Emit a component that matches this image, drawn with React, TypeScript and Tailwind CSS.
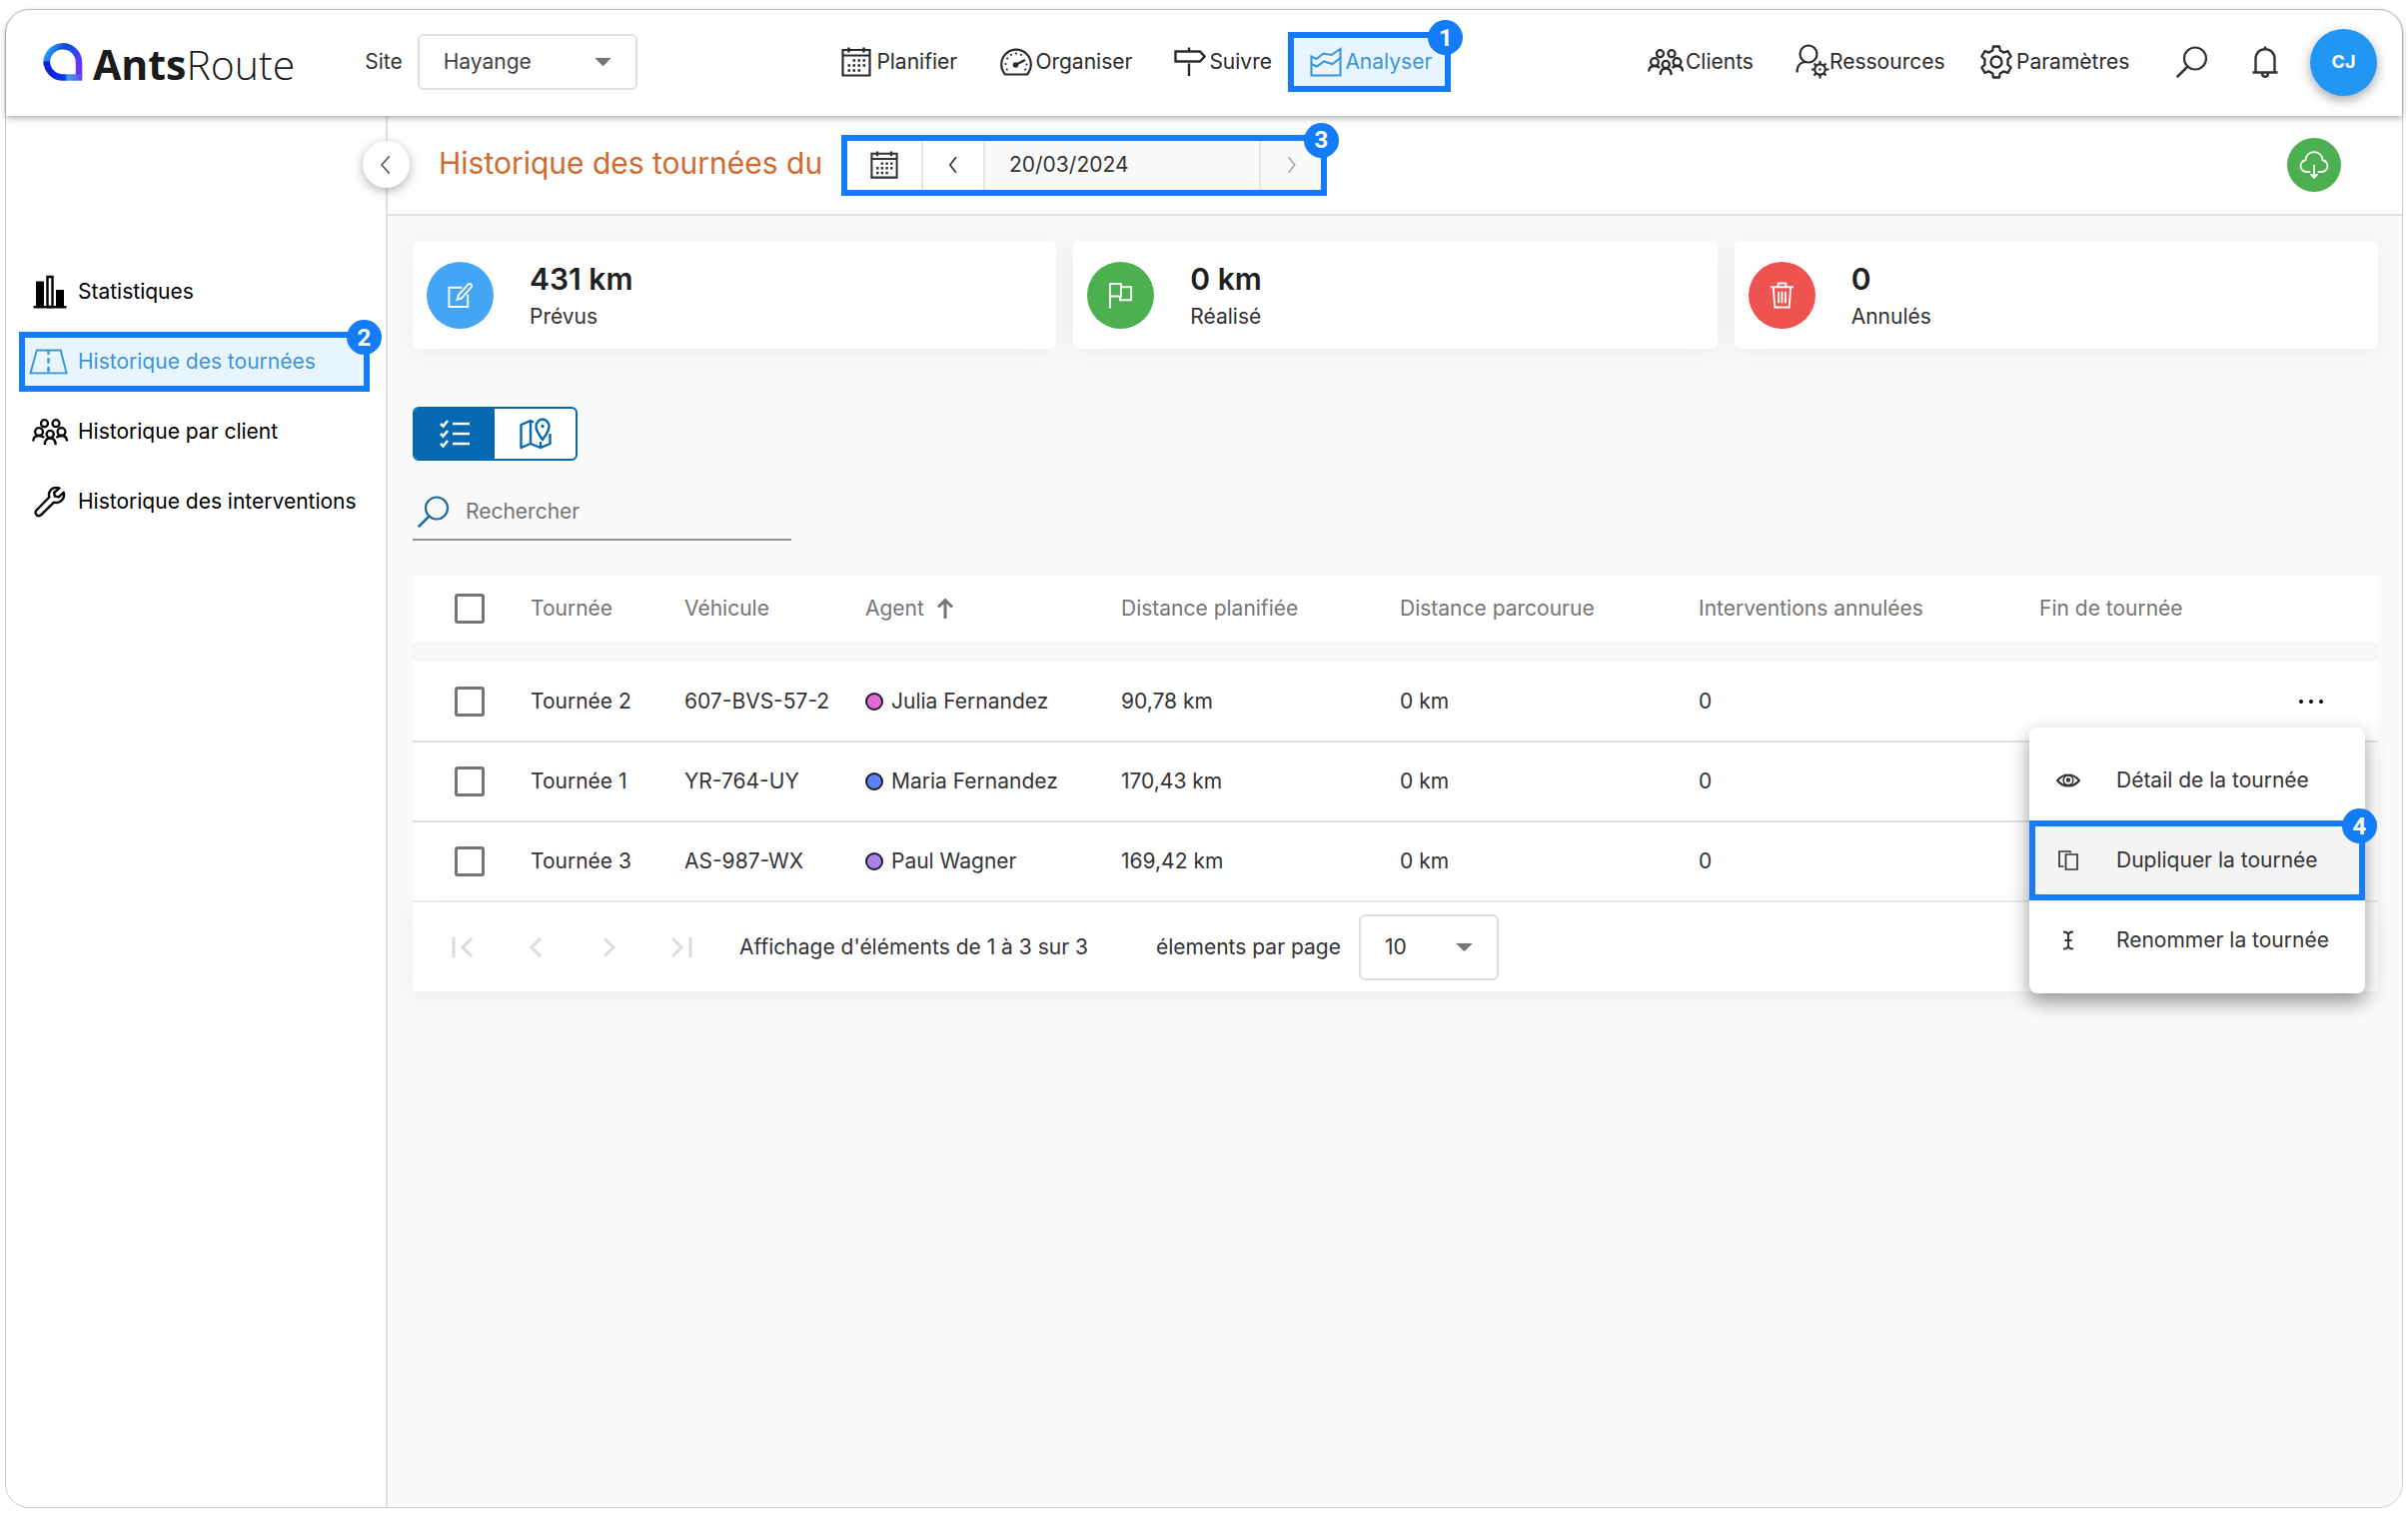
import type { ReactNode } from "react";
import clsx from "clsx";

interface IconProps {
  className?: string;
}

/* ---------- Icons ---------- */

const CalendarIcon = ({ className }: IconProps) => (
  <svg viewBox="0 0 30 30" fill="none" stroke="currentColor" strokeWidth="2.200" className={className}>
    <path d="M1.500 3h27v25.500h-27z M1.500 8.500h27" />
    <path d="M7.500 0.500v5M22.500 0.500v5" strokeWidth="2.500" />
    <path d="M11.500 13.500h13M6.500 18.500h18M6.500 23.500h13" strokeWidth="2.600" strokeDasharray="2.600 2.400" />
  </svg>
);

const GaugeIcon = ({ className }: IconProps) => (
  <svg viewBox="0 0 32 28" fill="none" stroke="currentColor" strokeWidth="2.200" className={className}>
    <path d="M5 26.500C2.500 23.500 1.200 20.200 1.200 16.500a14.800 14.800 0 0 1 29.600 0c0 3.700-1.300 7-3.800 10z" />
    <path d="M16 16.500l9-4.500" strokeWidth="2.400" />
    <circle cx="15.500" cy="17" r="2.800" fill="currentColor" stroke="none" />
    <g fill="currentColor" stroke="none">
      <circle cx="16" cy="5.500" r="1.100" />
      <circle cx="11" cy="6.800" r="1.100" />
      <circle cx="21" cy="6.800" r="1.100" />
      <circle cx="7.200" cy="10.500" r="1.100" />
      <circle cx="5.500" cy="16" r="1.100" />
      <circle cx="6.800" cy="21.500" r="1.100" />
      <circle cx="26.500" cy="16.500" r="1.100" />
      <circle cx="25.200" cy="21.500" r="1.100" />
    </g>
  </svg>
);

const SignpostIcon = ({ className }: IconProps) => (
  <svg viewBox="0 0 32 30" fill="none" stroke="currentColor" strokeWidth="2.400" className={className}>
    <path d="M1.500 4.500h24.500l4.500 5-4.500 5H1.500z M15 0.500v4 M15 16.500V29" />
  </svg>
);

const ChartIcon = ({ className }: IconProps) => (
  <svg viewBox="0 0 32 30" fill="none" stroke="currentColor" strokeWidth="2.100" className={className}>
    <path d="M1.500 9.500l5 2.500 7-5.500 8 1.500 9-6v26.500h-29z" />
    <path d="M1.500 17l5.500 2.500 7-5 8.500 2.500 8-6" />
  </svg>
);

const PeopleIcon = ({ className }: IconProps) => (
  <svg viewBox="0 0 36 26" fill="none" stroke="currentColor" strokeWidth="2.300" className={className}>
    <circle cx="12.500" cy="4.700" r="3.500" />
    <circle cx="24" cy="4.700" r="3.500" />
    <circle cx="7" cy="13" r="3.900" />
    <circle cx="29.500" cy="13" r="3.900" />
    <circle cx="18.200" cy="15.500" r="3.600" />
    <path d="M1.200 22.500c0-3.500 2-5.500 5.800-5.500 2.500 0 4 .6 5 2M35 22.500c0-3.500-2-5.500-5.500-5.500-2.500 0-4 .6-5 2" />
    <path d="M12.800 26c0-4 1.700-6.500 5.400-6.500s5.400 2.500 5.400 6.500" />
  </svg>
);

const UserGearIcon = ({ className }: IconProps) => (
  <svg viewBox="0 0 34 36" fill="none" stroke="currentColor" strokeWidth="2.200" className={className}>
    <circle cx="13" cy="10" r="8.500" />
    <path d="M1.500 28.500c0-6.500 3.500-10.500 9-10.500" />
    <circle cx="24.500" cy="25.500" r="5.200" />
    <circle cx="24.500" cy="25.500" r="1.200" fill="currentColor" stroke="none" />
    <path d="M24.500 17v3M24.500 31v3.500M16 25.500h3M30 25.500h3.500M18.500 19.500l2 2M28.500 29.500l2 2M30.500 19.500l-2 2M20.500 29.500l-2 2" />
  </svg>
);

const GearIcon = ({ className }: IconProps) => (
  <svg viewBox="0 0 34 34" fill="none" stroke="currentColor" strokeWidth="2.300" strokeLinejoin="round" className={className}>
    <path d="M14 1.500h6l.8 4.200c1.300.4 2.500 1.100 3.500 2l4.200-1.500 3.200 5.300-3.300 2.900c.3 1.700.3 3.500 0 5.200l3.300 2.900-3.200 5.300-4.200-1.500c-1 .9-2.200 1.600-3.500 2l-.8 4.200h-6l-.8-4.200c-1.300-.4-2.500-1.100-3.500-2l-4.200 1.500-3.200-5.300 3.300-2.900c-.3-1.700-.3-3.500 0-5.200l-3.300-2.900 3.200-5.300 4.200 1.500c1-.9 2.200-1.600 3.500-2z" />
    <circle cx="17" cy="17" r="5.500" />
  </svg>
);

const SearchIcon = ({ className }: IconProps) => (
  <svg viewBox="0 0 32 32" fill="none" stroke="currentColor" strokeWidth="2.200" strokeLinecap="round" className={className}>
    <circle cx="19" cy="12.500" r="11" />
    <path d="M11.500 20.500L1.500 30.500" strokeWidth="2.500" />
  </svg>
);

const BellIcon = ({ className }: IconProps) => (
  <svg viewBox="0 0 26 32" fill="none" stroke="currentColor" strokeWidth="2.400" className={className}>
    <path d="M0.500 26.500h25M3.500 26.500V13c0-6 4-9.800 9.500-9.800s9.500 3.800 9.500 9.800v13.500M13 0.500v3" />
    <path d="M10 27c0 2.500 1.200 3.800 3 3.800s3-1.300 3-3.800" />
  </svg>
);

const BarsIcon = ({ className }: IconProps) => (
  <svg viewBox="0 0 34 34" fill="currentColor" className={className}>
    <path d="M0.500 31h33v2.500H0.500z M3 6.500h8V32H3z M23 15h8v17h-8z" />
    <path d="M14.500 2h5v30h-5z" fill="none" stroke="currentColor" strokeWidth="2.400" />
  </svg>
);

const RoadIcon = ({ className }: IconProps) => (
  <svg viewBox="0 0 40 26" fill="none" stroke="currentColor" strokeWidth="2" className={className}>
    <path d="M8 1.500h24.500l6 23.500h-37z" />
    <path d="M20 1.500v23.500" strokeWidth="2.600" strokeDasharray="5.500 3.500" strokeDashoffset="1" />
  </svg>
);

const WrenchIcon = ({ className }: IconProps) => (
  <svg viewBox="0 0 32 32" fill="none" stroke="currentColor" strokeWidth="2.400" strokeLinejoin="round" className={className}>
    <path d="M25.500 2.500c-4-1.600-8.500.2-10 4-.7 1.800-.7 3.400-.2 5L2.500 24.500c-1.300 1.300-1.300 3.400 0 4.700s3.400 1.300 4.700 0L20 16.700c1.700.5 3.400.5 5-.2 4-1.600 6-6 4.700-9.700L25 11.200l-4.200-.6-.6-3.900z" />
  </svg>
);

const CloudIcon = ({ className }: IconProps) => (
  <svg viewBox="0 0 28 28" fill="none" stroke="currentColor" strokeWidth="1.800" className={className}>
    <path d="M10.500 20.500H6.500a5.500 5.500 0 0 1-.5-10.900C6.500 5 9.800 2 14 2s7.500 3 8 7.600a5.500 5.500 0 0 1-.5 10.900h-4" />
    <path d="M14 14v11M10.800 22.500L14 26l3.200-3.500" />
  </svg>
);

const EditIcon = ({ className }: IconProps) => (
  <svg viewBox="0 0 28 28" fill="none" stroke="currentColor" strokeWidth="2" className={className}>
    <path d="M16 6H2.500v20h19.500V13" />
    <path d="M11 18.500l1.500-5L22.500 2.500c1.800-1.500 4.500.8 3.200 3L15.500 17z" />
  </svg>
);

const FlagIcon = ({ className }: IconProps) => (
  <svg viewBox="0 0 26 28" fill="none" stroke="currentColor" strokeWidth="2" className={className}>
    <path d="M2 27.500V2h11.500v13H2M13.500 5.500H24V19H12.500v-4" />
  </svg>
);

const TrashIcon = ({ className }: IconProps) => (
  <svg viewBox="0 0 28 28" fill="none" stroke="currentColor" strokeWidth="2" className={className}>
    <path d="M2 5.500h24M5 5.500l1.500 21h15L23 5.500M10 5V1.500h8V5M10.500 10v12M14 10v12M17.500 10v12" />
  </svg>
);

const ChecklistIcon = ({ className }: IconProps) => (
  <svg viewBox="0 0 30 28" fill="none" stroke="currentColor" strokeWidth="2.600" className={className}>
    <path d="M13 4h17M13 14h17M13 24h17" />
    <path d="M1 4l2.500 2.500L8 1M1 14l2.500 2.500L8 11M1 24l2.500 2.500L8 21" />
  </svg>
);

const MapIcon = ({ className }: IconProps) => (
  <svg viewBox="0 0 32 32" fill="none" stroke="currentColor" strokeWidth="2.400" strokeLinejoin="round" className={className}>
    <path d="M14 4.500L11 3 1.500 7v23l9.500-4 10 4 9.500-4V16M11 3v23M21 24v6" />
    <path d="M23 22c-4-5.500-6.500-9-6.500-13a6.500 7.500 0 0 1 13 0c0 4-2.500 7.500-6.500 13z" />
    <circle cx="23" cy="8.500" r="1.700" fill="currentColor" stroke="none" />
  </svg>
);

const EyeIcon = ({ className }: IconProps) => (
  <svg viewBox="0 0 24 24" fill="none" stroke="currentColor" strokeWidth="2" className={className}>
    <path d="M1 12c3-3.700 6.800-5.500 11-5.500S20 8.300 23 12c-3 3.700-6.800 5.500-11 5.500S4 15.700 1 12z" />
    <circle cx="12" cy="11.800" r="4.800" strokeWidth="1.600" />
    <circle cx="12" cy="11.500" r="2.200" fill="currentColor" stroke="none" />
  </svg>
);

const CopyIcon = ({ className }: IconProps) => (
  <svg viewBox="0 0 24 24" fill="none" stroke="currentColor" strokeWidth="1.700" className={className}>
    <path d="M9.500 6H21v15H9.500z M7.500 18H3V3h11v1.500" />
  </svg>
);

const CursorIcon = ({ className }: IconProps) => (
  <svg viewBox="0 0 24 24" fill="none" stroke="currentColor" strokeWidth="1.900" className={className}>
    <path d="M7 3.500c3.500 0 5 1.500 5 3.500v10c0 2-1.500 3.500-5 3.500M17 3.500c-3.500 0-5 1.500-5 3.500v10c0 2 1.500 3.500 5 3.500M8.500 12h7" />
  </svg>
);

const ArrowUpIcon = ({ className }: IconProps) => (
  <svg viewBox="0 0 18 22" fill="none" stroke="currentColor" strokeWidth="3" className={className}>
    <path d="M9 21V3M2 9.500L9 2.500l7 7" />
  </svg>
);

const Chevron = ({ d, className }: IconProps & { d: string }) => (
  <svg viewBox="0 0 24 28" fill="none" stroke="currentColor" className={className}>
    <path d={d} />
  </svg>
);

const Caret = () => (
  <svg viewBox="0 0 18 9" className="pointer-events-none absolute right-[26px] top-1/2 w-[17px] -translate-y-1/2 fill-[#757575]">
    <path d="M0 0h18L9 9z" />
  </svg>
);

const Logo = () => (
  <a href="#" aria-label="AntsRoute" className="flex items-center gap-2.5 text-[#1b1b1b]">
    <svg viewBox="0 0 40 40" className="size-10" fill="none" strokeWidth="6.500">
      <defs>
        <linearGradient id="logo-top" x1="0" y1="0" x2="1" y2="0.600">
          <stop offset="0" stopColor="#38b6f5" />
          <stop offset="0.400" stopColor="#0c4be0" />
          <stop offset="0.700" stopColor="#2a48f0" />
          <stop offset="1" stopColor="#6a35ee" />
        </linearGradient>
        <linearGradient id="logo-bottom" x1="0" y1="0" x2="1" y2="0">
          <stop offset="0" stopColor="#0d1fd8" />
          <stop offset="0.500" stopColor="#0a35ee" />
          <stop offset="0.600" stopColor="#3f9ff5" />
          <stop offset="1" stopColor="#6a45f0" />
        </linearGradient>
      </defs>
      <path d="M3.800 23A16.200 16.200 0 1 1 36 20v16" stroke="url(#logo-top)" />
      <path d="M3.800 19.500A16.200 16.200 0 0 0 20 35.500h19.200" stroke="url(#logo-bottom)" />
    </svg>
    <span className="pt-1 font-['Open_Sans',sans-serif] text-[41px] leading-none">
      <span className="font-bold">Ants</span>
      <span className="font-light">Route</span>
    </span>
  </a>
);

/* ---------- Shared parts ---------- */

const Badge = ({ children }: { children: ReactNode }) => (
  <span className="absolute -right-[18px] -top-[18px] z-10 flex size-[35px] items-center justify-center rounded-full bg-[#147cf8] font-['Roboto',sans-serif] text-2xl font-bold text-white">
    {children}
  </span>
);

const NavLink = ({ icon, children, className }: { icon: ReactNode; children: ReactNode; className?: string }) => (
  <a href="#" className={clsx("flex items-center text-[#2b2b2b]", className)}>
    {icon}
    {children}
  </a>
);

const CHECKBOX =
  "block size-[30px] appearance-none rounded-[3px] border-3 border-[#757575] bg-white checked:bg-[#0568b0]";

const tours = [
  { name: "Tournée 2", vehicle: "607-BVS-57-2", agent: "Julia Fernandez", dot: "bg-[#df6bd6]", planned: "90,78 km" },
  { name: "Tournée 1", vehicle: "YR-764-UY", agent: "Maria Fernandez", dot: "bg-[#5b82f0]", planned: "170,43 km" },
  { name: "Tournée 3", vehicle: "AS-987-WX", agent: "Paul Wagner", dot: "bg-[#a884ea]", planned: "169,42 km" },
];

const stats = [
  { value: "431 km", label: "Prévus", color: "bg-[#42a5f5]", icon: <EditIcon className="size-[27px]" /> },
  { value: "0 km", label: "Réalisé", color: "bg-[#4caf50]", icon: <FlagIcon className="size-[27px]" /> },
  { value: "0", label: "Annulés", color: "bg-[#ef5350]", icon: <TrashIcon className="size-[27px]" /> },
];

/* ---------- Sections ---------- */

const Header = () => (
  <header className="relative z-20 flex h-[106px] items-center justify-between rounded-t-3xl bg-white pb-0.5 pl-[37px] pr-[25px] shadow-[0_2px_6px_rgba(0,0,0,0.35)]">
    <div className="flex items-center">
      <Logo />
      <div className="ml-[70px] flex items-center gap-[15px]">
        <label htmlFor="site">Site</label>
        <div className="relative">
          <select
            id="site"
            className="h-14 w-[220px] appearance-none rounded-md border-2 border-[#e0e0e0] bg-white pl-6 text-[#424242]"
          >
            <option>Hayange</option>
          </select>
          <Caret />
        </div>
      </div>
    </div>

    <nav className="ml-2 flex items-center">
      <NavLink icon={<CalendarIcon className="size-[30px]" />} className="w-[159px] gap-[5px]">
        Planifier
      </NavLink>
      <NavLink icon={<GaugeIcon className="w-8" />} className="w-[174px] gap-[3px]">
        Organiser
      </NavLink>
      <NavLink icon={<SignpostIcon className="w-8" />} className="w-[114px] gap-[3px]">
        Suivre
      </NavLink>
      <div className="relative border-6 border-[#147cf8] bg-[#e9f5fe]">
        <a href="#" className="flex h-12 w-[151px] items-center gap-[3px] pl-4 text-[#3a96da]">
          <ChartIcon className="w-8" />
          Analyser
        </a>
        <Badge>1</Badge>
      </div>
    </nav>

    <div className="flex items-center">
      <NavLink icon={<PeopleIcon className="w-9" />} className="w-[148px] gap-0.5">
        Clients
      </NavLink>
      <NavLink icon={<UserGearIcon className="w-[34px]" />} className="w-[184px]">
        Ressources
      </NavLink>
      <NavLink icon={<GearIcon className="w-[34px]" />} className="w-[197px] gap-[3px]">
        Paramètres
      </NavLink>
      <button aria-label="Rechercher">
        <SearchIcon className="size-8" />
      </button>
      <button aria-label="Notifications" className="ml-11">
        <BellIcon className="h-8" />
      </button>
      <button className="ml-8 size-[67px] rounded-full bg-[#2196f3] text-lg font-bold text-white shadow-[0_4px_12px_rgba(0,0,0,0.35)]">
        CJ
      </button>
    </div>
  </header>
);

const Sidebar = () => (
  <aside className="relative w-[382px] shrink-0 rounded-bl-3xl border-r-2 border-[#e0e0e0] bg-white">
    <button
      aria-label="Réduire le menu"
      className="absolute -right-6 top-[25px] z-10 flex size-[47px] items-center justify-center rounded-full bg-white text-[#616161] shadow-[0_3px_12px_rgba(0,0,0,0.3)]"
    >
      <Chevron d="M16 4L7 14l9 10" className="h-6 stroke-[2]" />
    </button>
    <nav className="flex flex-col gap-2.5 pt-[146px] text-black">
      <a href="#" className="flex h-15 items-center pl-[27px]">
        <BarsIcon className="mr-[11px] w-[34px]" />
        Statistiques
      </a>
      <div className="relative ml-[13px] w-[351px] border-6 border-[#147cf8] bg-[#e9f5fe]">
        <a href="#" className="flex h-12 items-center pl-1 text-[#3a96da]">
          <RoadIcon className="mr-2.5 w-[39px]" />
          Historique des tournées
        </a>
        <Badge>2</Badge>
      </div>
      <a href="#" className="flex h-15 items-center pl-[26px]">
        <PeopleIcon className="mr-2.5 w-9" />
        Historique par client
      </a>
      <a href="#" className="flex h-15 items-center pl-7">
        <WrenchIcon className="mr-3 w-8" />
        Historique des interventions
      </a>
    </nav>
  </aside>
);

const TitleBar = () => (
  <div className="flex h-[100px] items-center justify-between border-b-2 border-[#e0e0e0] bg-white pl-[51px] pr-[61px]">
    <div className="flex items-center">
      <h1 className="w-[403px] pb-1 text-[30px] text-[#d2692f]">Historique des tournées du</h1>
      <div className="relative flex h-[61px] border-6 border-[#147cf8] bg-white">
        <button aria-label="Calendrier" className="flex w-[76px] items-center justify-center border-r-2 border-[#e6e6e6]">
          <CalendarIcon className="size-7" />
        </button>
        <button aria-label="Jour précédent" className="flex w-[62px] items-center justify-center border-r-2 border-[#e6e6e6]">
          <Chevron d="M15 5l-7 9 7 9" className="h-6 stroke-[2]" />
        </button>
        <input
          aria-label="Date"
          defaultValue="20/03/2024"
          className="w-[276px] border-r-2 border-[#e6e6e6] bg-[#fafafa] pl-6 text-[#333]"
        />
        <button aria-label="Jour suivant" className="flex w-[60px] items-center justify-center bg-[#fafafa] text-[#aaa]">
          <Chevron d="M9 5l7 9-7 9" className="h-6 stroke-[2]" />
        </button>
        <Badge>3</Badge>
      </div>
    </div>
    <button aria-label="Télécharger" className="flex size-[54px] items-center justify-center rounded-full bg-[#4caf50] text-white">
      <CloudIcon className="w-[30px]" />
    </button>
  </div>
);

const RowMenu = () => (
  <div className="absolute right-[13px] top-[66px] z-10 w-[336px] rounded-lg bg-white py-[13px] text-[#333] shadow-[0_8px_20px_rgba(0,0,0,0.4)]">
    <button className="flex h-20 w-full items-center pl-[27px]">
      <EyeIcon className="mr-9 size-6" />
      Détail de la tournée
    </button>
    <div className="relative border-6 border-[#147cf8] bg-[#f4f4f4]">
      <button className="flex h-[68px] w-full items-center whitespace-nowrap pl-[21px]">
        <CopyIcon className="mr-9 size-6" />
        Dupliquer la tournée
      </button>
      <Badge>4</Badge>
    </div>
    <button className="flex h-20 w-full items-center whitespace-nowrap pl-[27px]">
      <CursorIcon className="mr-9 size-6" />
      Renommer la tournée
    </button>
  </div>
);

const ToursTable = () => (
  <table className="w-full table-fixed text-left">
    <thead>
      <tr className="h-[66px] bg-white text-[#757575] *:font-normal">
        <th className="w-[118px] pl-[42px]">
          <input type="checkbox" aria-label="Tout sélectionner" className={CHECKBOX} />
        </th>
        <th className="w-[154px]">Tournée</th>
        <th className="w-[181px]">Véhicule</th>
        <th className="w-[256px]">
          <span className="flex items-center gap-3">
            Agent
            <ArrowUpIcon className="w-[18px]" />
          </span>
        </th>
        <th className="w-[279px]">Distance planifiée</th>
        <th className="w-[299px]">Distance parcourue</th>
        <th className="w-[341px]">Interventions annulées</th>
        <th>Fin de tournée</th>
        <th className="w-[130px]" />
      </tr>
      <tr className="h-5">
        <td colSpan={9} className="bg-[#f7f7f9]" />
      </tr>
    </thead>
    <tbody>
      {tours.map((tour, i) => (
        <tr key={tour.name} className="h-20 border-b-2 border-[#e0e0e0] bg-white last:border-[#eeeff3]">
          <td className="pl-[42px]">
            <input type="checkbox" aria-label={tour.name} className={CHECKBOX} />
          </td>
          <td>{tour.name}</td>
          <td>{tour.vehicle}</td>
          <td>
            <span className="flex items-center gap-2">
              <span className={clsx("size-[18px] rounded-full border-2 border-[#1c1c2c]", tour.dot)} />
              {tour.agent}
            </span>
          </td>
          <td>{tour.planned}</td>
          <td>0 km</td>
          <td>0</td>
          <td />
          <td className="relative">
            {i === 0 && (
              <>
                <button aria-label="Actions" className="ml-[51px] flex h-8 items-center gap-1.5">
                  <span className="size-1 rounded-full bg-black" />
                  <span className="size-1 rounded-full bg-black" />
                  <span className="size-1 rounded-full bg-black" />
                </button>
                <RowMenu />
              </>
            )}
          </td>
        </tr>
      ))}
    </tbody>
  </table>
);

const Pagination = () => (
  <div className="flex h-[89px] items-center bg-white pl-[38px] shadow-[0_4px_24px_rgba(60,60,90,0.07)]">
    <div className="flex gap-[49px] text-[#dcdcdc]">
      <button aria-label="Première page">
        <Chevron d="M3 4v20M21 5l-9 9 9 9" className="w-6 stroke-[3]" />
      </button>
      <button aria-label="Page précédente">
        <Chevron d="M17 5l-9 9 9 9" className="w-6 stroke-[3]" />
      </button>
      <button aria-label="Page suivante">
        <Chevron d="M8 5l9 9-9 9" className="w-6 stroke-[3]" />
      </button>
      <button aria-label="Dernière page">
        <Chevron d="M3 5l9 9-9 9M21 4v20" className="w-6 stroke-[3]" />
      </button>
    </div>
    <span className="ml-[46px] w-[417px]">Affichage d'éléments de 1 à 3 sur 3</span>
    <label htmlFor="page-size" className="w-[203px]">
      élements par page
    </label>
    <div className="relative">
      <select
        id="page-size"
        className="h-[66px] w-[140px] appearance-none rounded-md border-2 border-[#e0e0e0] bg-white pl-6 text-[#333]"
      >
        <option>10</option>
      </select>
      <Caret />
    </div>
  </div>
);

export default function App() {
  return (
    <div className="flex min-h-screen bg-white px-[5px] pb-2 pt-[9px] font-['Inter','Liberation_Sans',sans-serif] text-[21px] leading-7 text-[#333]">
      <div className="flex min-w-0 flex-1 flex-col rounded-3xl border border-[#ccc]">
        <Header />
        <div className="flex flex-1">
          <Sidebar />
          <main className="min-w-0 flex-1 rounded-br-3xl bg-[#fafafa]">
            <TitleBar />
            <div className="pl-[25px] pr-6 pt-[25px]">
              <section className="grid grid-cols-3 gap-[17px]">
                {stats.map((stat) => (
                  <div
                    key={stat.label}
                    className="flex h-[108px] items-center gap-9 rounded-md bg-white pl-3.5 shadow-[0_4px_24px_rgba(60,60,90,0.07)]"
                  >
                    <div className={clsx("flex size-[67px] items-center justify-center rounded-full text-white", stat.color)}>
                      {stat.icon}
                    </div>
                    <div className="pt-2">
                      <p className="text-[30px] font-semibold leading-9 text-[#212121]">{stat.value}</p>
                      <p className="leading-10">{stat.label}</p>
                    </div>
                  </div>
                ))}
              </section>

              <div className="mt-[58px] flex h-[54px] w-[165px] overflow-hidden rounded-md border-2 border-[#0568b0] bg-white">
                <button aria-label="Liste" className="flex w-20 items-center justify-center bg-[#0568b0] text-white">
                  <ChecklistIcon className="w-[30px]" />
                </button>
                <button aria-label="Carte" className="flex flex-1 items-center justify-center text-[#0568b0]">
                  <MapIcon className="w-8" />
                </button>
              </div>

              <label className="mt-6 flex h-14 w-[379px] items-center gap-4 border-b-2 border-[#949494] pl-[5px] text-[#1a6aa8]">
                <SearchIcon className="size-8 shrink-0" />
                <input
                  type="search"
                  aria-label="Rechercher"
                  placeholder="Rechercher"
                  className="w-full bg-transparent outline-none placeholder:text-[#757575]"
                />
              </label>

              <section className="mt-[35px]">
                <ToursTable />
                <Pagination />
              </section>
            </div>
          </main>
        </div>
      </div>
    </div>
  );
}
